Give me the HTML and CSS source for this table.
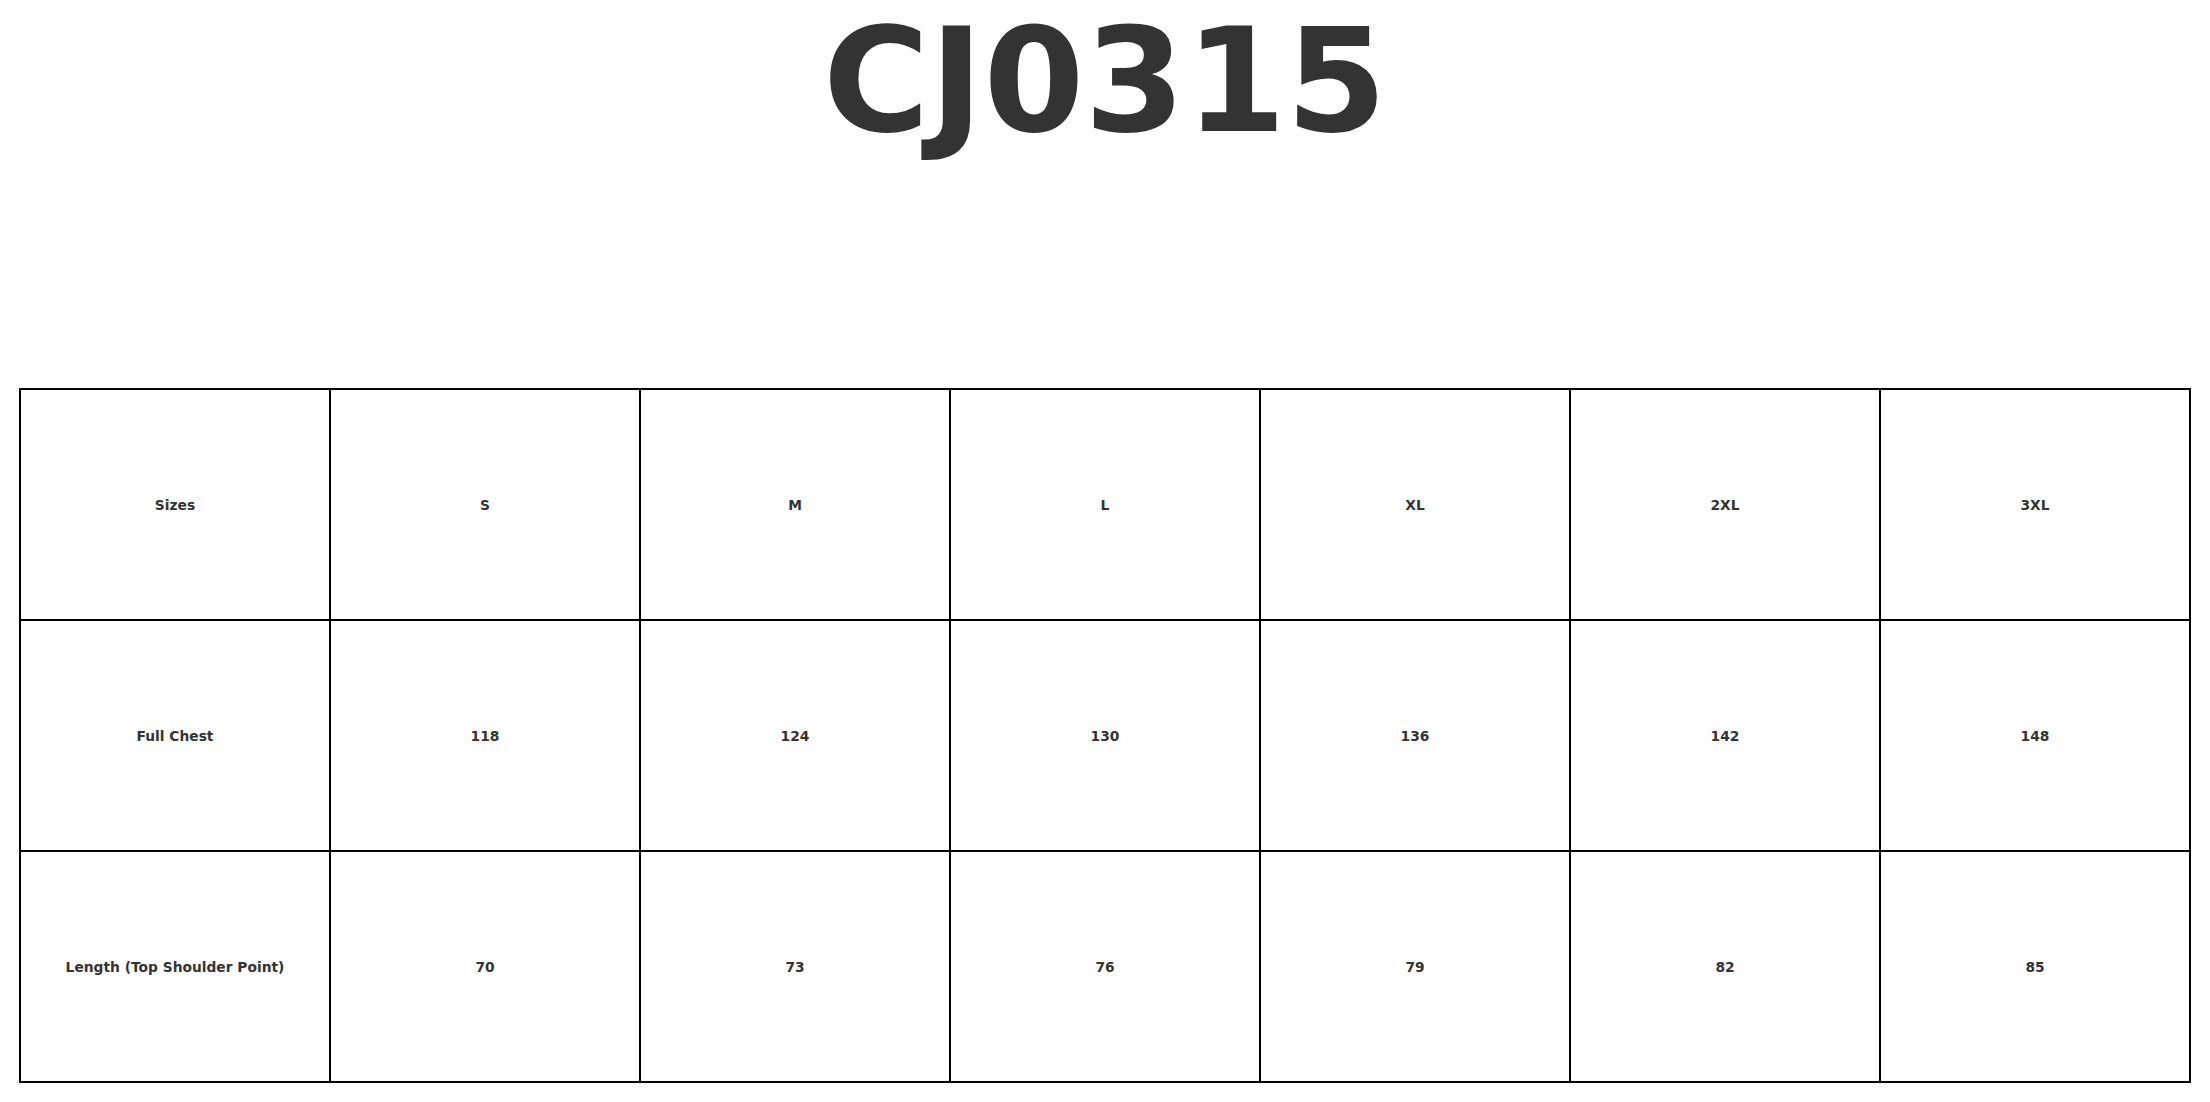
FILE: index.html
```html
<!DOCTYPE html>
<html>
<head>
<meta charset="utf-8">
<link rel="stylesheet" href="styles.css">
</head>
<body>
<h1 class="title">CJ0315</h1>
<div class="table">
  <div class="cell">Sizes</div>
  <div class="cell">S</div>
  <div class="cell">M</div>
  <div class="cell">L</div>
  <div class="cell">XL</div>
  <div class="cell">2XL</div>
  <div class="cell">3XL</div>
  <div class="cell">Full Chest</div>
  <div class="cell">118</div>
  <div class="cell">124</div>
  <div class="cell">130</div>
  <div class="cell">136</div>
  <div class="cell">142</div>
  <div class="cell">148</div>
  <div class="cell">Length (Top Shoulder Point)</div>
  <div class="cell">70</div>
  <div class="cell">73</div>
  <div class="cell">76</div>
  <div class="cell">79</div>
  <div class="cell">82</div>
  <div class="cell">85</div>
</div>
</body>
</html>
```

FILE: styles.css
```css
html, body {
  margin: 0;
  padding: 0;
  background: #ffffff;
}
body {
  width: 2210px;
  height: 1102px;
  overflow: hidden;
  font-family: "DejaVu Sans", sans-serif;
}
.title {
  margin: 0;
  padding-top: 8px;
  height: 145px;
  font-size: 145px;
  line-height: 145px;
  font-weight: bold;
  color: #333333;
  text-align: center;
}
.table {
  margin-top: 235px;
  margin-left: 19px;
  width: 2170px;
  display: grid;
  grid-template-columns: repeat(7, 310px);
  grid-auto-rows: 231px;
  border-left: 2px solid #000;
  border-top: 2px solid #000;
}
.cell {
  border-right: 2px solid #000;
  border-bottom: 2px solid #000;
  display: flex;
  align-items: center;
  justify-content: center;
  font-size: 13.8px;
  font-weight: bold;
  color: #333333;
}
```
